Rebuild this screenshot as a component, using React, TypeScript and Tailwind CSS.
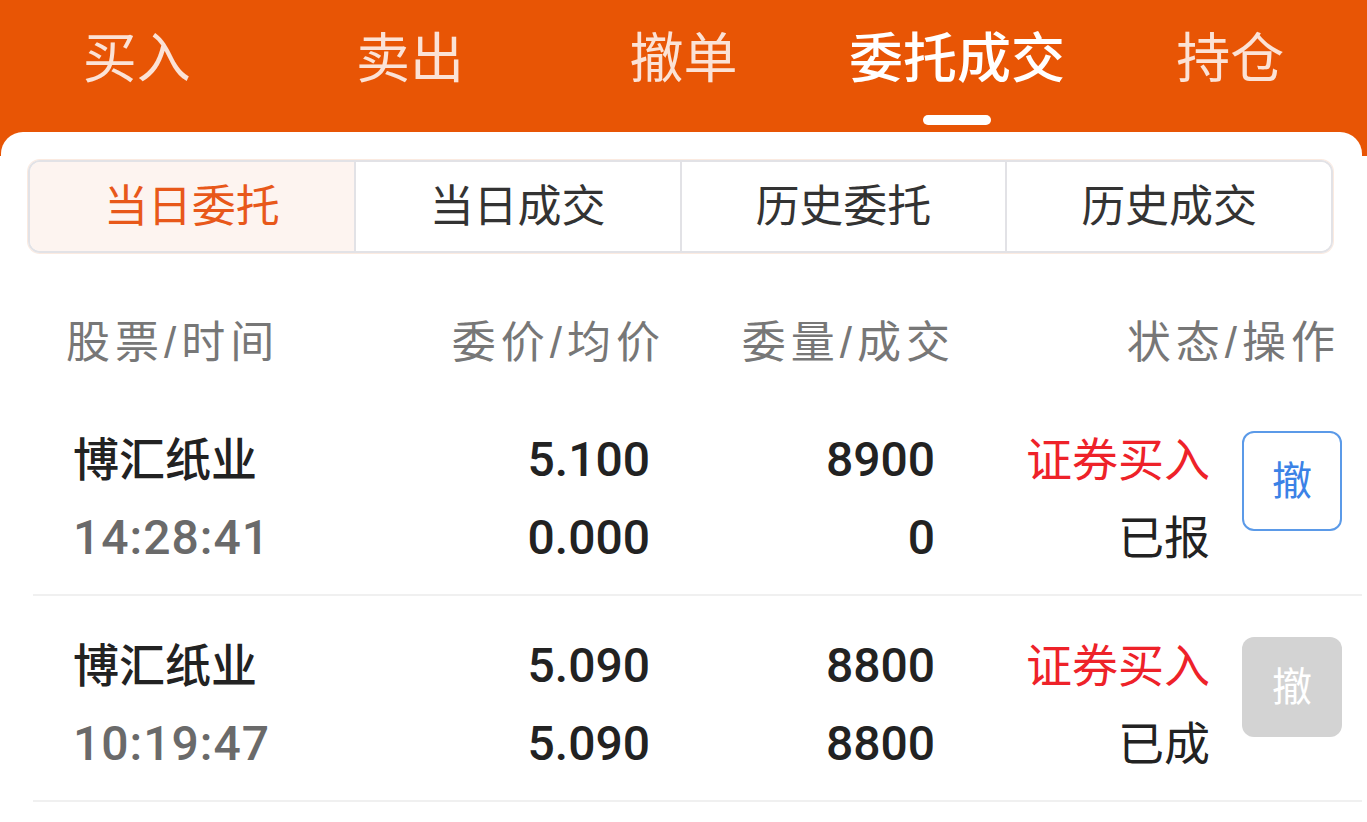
import React from "react";

const FONT = '"Liberation Sans", "Noto Sans CJK SC", sans-serif';
const NUM = 'Roboto, "Liberation Sans", "Noto Sans CJK SC", sans-serif';

const tabs = ["买入", "卖出", "撤单", "委托成交", "持仓"];
const segs = ["当日委托", "当日成交", "历史委托", "历史成交"];

type Row = {
  name: string;
  time: string;
  price: string;
  avg: string;
  qty: string;
  deal: string;
  status: string;
  active: boolean;
};

const rows: Row[] = [
  { name: "博汇纸业", time: "14:28:41", price: "5.100", avg: "0.000", qty: "8900", deal: "0", status: "已报", active: true },
  { name: "博汇纸业", time: "10:19:47", price: "5.090", avg: "5.090", qty: "8800", deal: "8800", status: "已成", active: false },
];

export default function App() {
  return (
    <div
      className="w-[1367px] h-[822px] overflow-hidden bg-[linear-gradient(to_bottom,#e85505_0px,#e85505_156px,#ffffff_156px)]"
      style={{ fontFamily: FONT }}
    >
      {/* Top tabs */}
      <div className="h-[132px] flex">
        {tabs.map((t, i) => {
          const active = i === 3;
          return (
            <div key={t} className="flex-1 flex flex-col items-center">
              <div
                className={
                  "mt-[28px] h-[62px] flex items-center text-[54px] leading-none " +
                  (active ? "text-white font-medium" : "text-[#fbe2d6]")
                }
              >
                {t}
              </div>
              {active && <div className="mt-[25px] w-[68px] h-[10px] rounded-full bg-white" />}
            </div>
          );
        })}
      </div>

      {/* Card */}
      <div className="ml-[1px] w-[1361px] h-[690px] bg-white rounded-t-[22px] pt-[28px]">
        {/* segmented control */}
        <div className="ml-[27px] w-[1305px] h-[93px] flex rounded-[12px] border-2 border-[#e2e2e6] overflow-hidden shadow-[0_0_0_1px_rgba(240,170,130,0.25)]">
          {segs.map((s, i) => (
            <div
              key={s}
              className={
                "flex-1 flex items-center justify-center text-[44px] " +
                (i > 0 ? "border-l-2 border-[#e2e2e6] " : "") +
                (i === 0 ? "bg-[#fdf4f0] text-[#e8581a]" : "bg-white text-[#333333]")
              }
            >
              {s}
            </div>
          ))}
        </div>

        {/* column headers */}
        <div className="flex h-[86px] mt-[47px] items-center text-[44px] text-[#777777] tracking-[5px]">
          <div className="ml-[65px] w-[334px]">股票/时间</div>
          <div className="w-[265px] text-right">委价/均价</div>
          <div className="w-[290px] text-right">委量/成交</div>
          <div className="w-[385px] text-right">状态/操作</div>
        </div>

        {/* rows */}
        <div className="mt-[4px]">
          {rows.map((r, idx) => (
            <div key={idx} className="ml-[32px] flex pt-[31px] pb-[17px] border-b-2 border-[#f0f0f0]">
              <div className="ml-[40px] w-[327px] flex flex-col">
                <div className="h-[78px] flex items-center text-[46px] font-medium text-[#222222]">{r.name}</div>
                <div
                  className="h-[78px] flex items-center text-[48px] font-medium text-[#6a6a6a] tracking-[1px]"
                  style={{ fontFamily: NUM }}
                >
                  {r.time}
                </div>
              </div>
              <div
                className="w-[250px] flex flex-col items-end text-[48px] font-medium text-[#222222]"
                style={{ fontFamily: NUM }}
              >
                <div className="h-[78px] flex items-center">{r.price}</div>
                <div className="h-[78px] flex items-center">{r.avg}</div>
              </div>
              <div
                className="w-[285px] flex flex-col items-end text-[48px] font-medium text-[#222222]"
                style={{ fontFamily: NUM }}
              >
                <div className="h-[78px] flex items-center">{r.qty}</div>
                <div className="h-[78px] flex items-center">{r.deal}</div>
              </div>
              <div className="w-[275px] flex flex-col items-end text-[46px]">
                <div className="h-[78px] flex items-center text-[#ee2229]">证券买入</div>
                <div className="h-[78px] flex items-center text-[#222222]">{r.status}</div>
              </div>
              <div className="ml-[32px] mt-[10px]">
                {r.active ? (
                  <div className="w-[100px] h-[100px] rounded-[12px] border-2 border-[#5b9ae8] flex items-center justify-center text-[40px] text-[#3b82e6]">
                    撤
                  </div>
                ) : (
                  <div className="w-[100px] h-[100px] rounded-[12px] bg-[#d3d3d3] flex items-center justify-center text-[40px] text-white">
                    撤
                  </div>
                )}
              </div>
            </div>
          ))}
        </div>
      </div>
    </div>
  );
}
